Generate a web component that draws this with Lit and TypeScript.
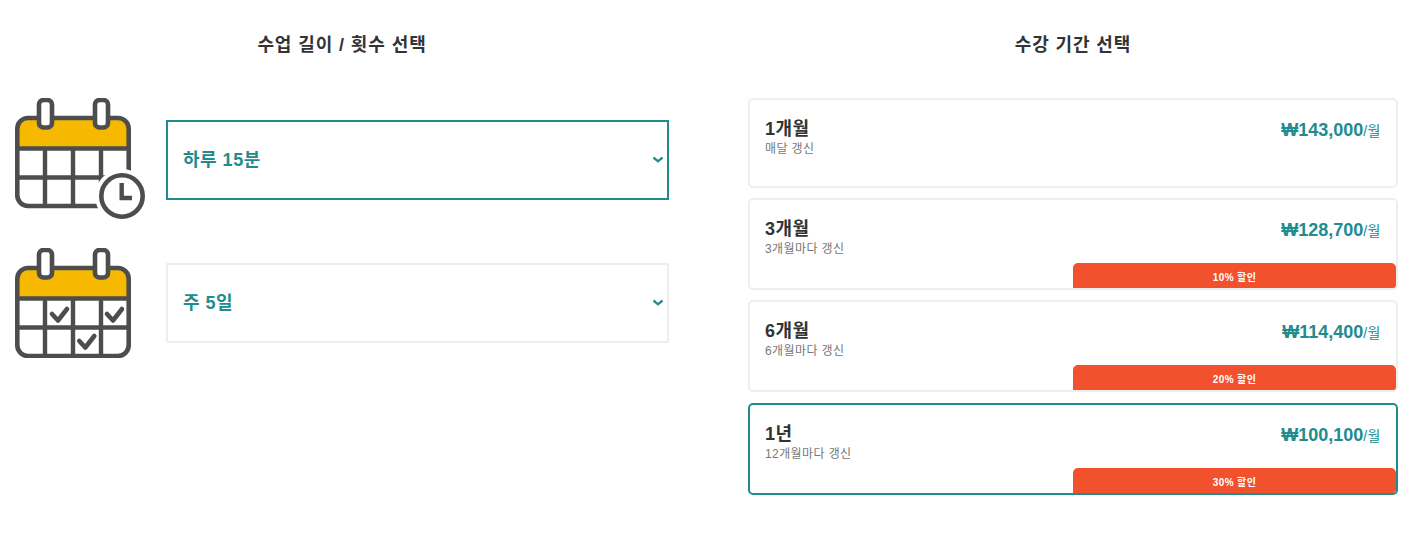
import { LitElement, html, css, svg } from 'lit';
import { customElement } from 'lit/decorators.js';

const plans = [
	{ name: '1개월', note: '매달 갱신', price: '₩143,000', off: '', cls: 'first' },
	{ name: '3개월', note: '3개월마다 갱신', price: '₩128,700', off: '10% 할인', cls: '' },
	{ name: '6개월', note: '6개월마다 갱신', price: '₩114,400', off: '20% 할인', cls: '' },
	{ name: '1년', note: '12개월마다 갱신', price: '₩100,100', off: '30% 할인', cls: 'picked' }
];

// shared calendar body, grid lines are added per icon
const calendar = svg`
	<path d="M13 20H103A10.7 10.7 0 0 1 113.7 30.7V50H2.3V30.7A10.7 10.7 0 0 1 13 20Z" fill="#f7b900"/>
	<rect x="2.3" y="20" width="111.4" height="88" rx="10.7" fill="none" stroke="#4d4d4d" stroke-width="4.6"/>
	<path d="M2 50.5H114M30 50V108M58 50V108M86 50V108M2 79.5H114" fill="none" stroke="#4d4d4d" stroke-width="4.4"/>
	<rect x="24" y="2" width="13" height="27.5" rx="4.5" fill="#fff" stroke="#4d4d4d" stroke-width="4.6"/>
	<rect x="80" y="2" width="13" height="27.5" rx="4.5" fill="#fff" stroke="#4d4d4d" stroke-width="4.6"/>
`;

const check = (x: number, y: number) =>
	svg`<path d="M${x} ${y}l6 6.5l9-11.5" fill="none" stroke="#4d4d4d" stroke-width="4.6" stroke-linecap="round" stroke-linejoin="round"/>`;

const chevron = html`<svg class="chev" width="12" height="8" viewBox="0 0 12 8">
	<path d="M1.5 1.5l4.5 3.800l4.500-3.800" fill="none" stroke="#218b8e" stroke-width="2.300"/>
</svg>`;

@customElement('app-root')
export class AppRoot extends LitElement {
	static styles = css`
		:host {
			display: block;
			font-family: 'Liberation Sans', 'Noto Sans CJK KR', sans-serif;
			color: #333;
		}

		.page {
			display: grid;
			grid-template-columns: 654px 650px;
			column-gap: 79px;
			padding: 33px 0 0 15px;
		}

		h2 {
			margin: 0 0 41px;
			height: 24px;
			line-height: 24px;
			font-size: 18px;
			font-weight: 700;
			letter-spacing: 0.9px;
			text-align: center;
		}

		.rows {
			display: flex;
			flex-direction: column;
			gap: 26px;
		}

		.row {
			display: flex;
			align-items: center;
			gap: 21px;
		}

		.row svg.icon {
			flex: none;
			display: block;
		}

		.select {
			flex: 1;
			display: flex;
			align-items: center;
			justify-content: space-between;
			box-sizing: border-box;
			height: 80px;
			padding: 0 3px 0 15px;
			border: 2px solid #eee;
			font-size: 18px;
			font-weight: 700;
			letter-spacing: 0.5px;
			color: #218b8e;
		}

		.select span {
			padding-bottom: 4px;
		}

		.select.on {
			border-color: #218b8e;
		}

		.plans {
			display: flex;
			flex-direction: column;
			gap: 10px;
		}

		.card {
			display: flex;
			flex-direction: column;
			box-sizing: border-box;
			height: 92px;
			border: 2px solid #eee;
			border-radius: 5px;
			overflow: hidden;
		}

		.card.first {
			height: 90px;
		}

		.card.picked {
			border-color: #218b8e;
			margin-top: 1px;
		}

		.top {
			display: flex;
			justify-content: space-between;
			padding: 19px 15px 0;
		}

		.name {
			font-size: 18px;
			line-height: 20px;
			font-weight: 700;
			letter-spacing: 0.5px;
		}

		.note {
			margin-top: 2px;
			font-size: 12px;
			line-height: 16px;
			letter-spacing: 0.4px;
			color: #777;
		}

		.price {
			padding-top: 1px;
			font-size: 18px;
			line-height: 20px;
			font-weight: 700;
			color: #218b8e;
		}

		.price span {
			font-size: 14px;
			font-weight: 400;
			letter-spacing: 0.5px;
		}

		.off {
			align-self: flex-end;
			margin-top: auto;
			width: 323px;
			height: 25px;
			line-height: 29px;
			border-radius: 5px 5px 0 0;
			background: #f1512d;
			color: #fff;
			font-size: 10px;
			font-weight: 700;
			letter-spacing: 0.4px;
			text-align: center;
		}
	`;

	render() {
		return html`<div class="page">
			<section>
				<h2>수업 길이 / 횟수 선택</h2>
				<div class="rows">
					<div class="row">
						<svg class="icon" width="130" height="124" viewBox="0 0 130 124">
							${calendar}
							<circle cx="107" cy="98" r="27" fill="#fff"/>
							<circle cx="107" cy="98" r="20.7" fill="#fff" stroke="#4d4d4d" stroke-width="4.6"/>
							<path d="M106.7 85V100H117" fill="none" stroke="#4d4d4d" stroke-width="4.4"/>
						</svg>
						<div class="select on"><span>하루 15분</span>${chevron}</div>
					</div>
					<div class="row">
						<svg class="icon" width="130" height="110" viewBox="0 0 130 110">
							${calendar} ${check(37, 66)} ${check(92, 66)} ${check(64.3, 93)}
						</svg>
						<div class="select"><span>주 5일</span>${chevron}</div>
					</div>
				</div>
			</section>
			<section>
				<h2>수강 기간 선택</h2>
				<div class="plans">
					${plans.map(
						(p) => html`<div class="card ${p.cls}">
							<div class="top">
								<div>
									<div class="name">${p.name}</div>
									<div class="note">${p.note}</div>
								</div>
								<div class="price">${p.price}<span>/월</span></div>
							</div>
							${p.off ? html`<div class="off">${p.off}</div>` : ''}
						</div>`
					)}
				</div>
			</section>
		</div>`;
	}
}
